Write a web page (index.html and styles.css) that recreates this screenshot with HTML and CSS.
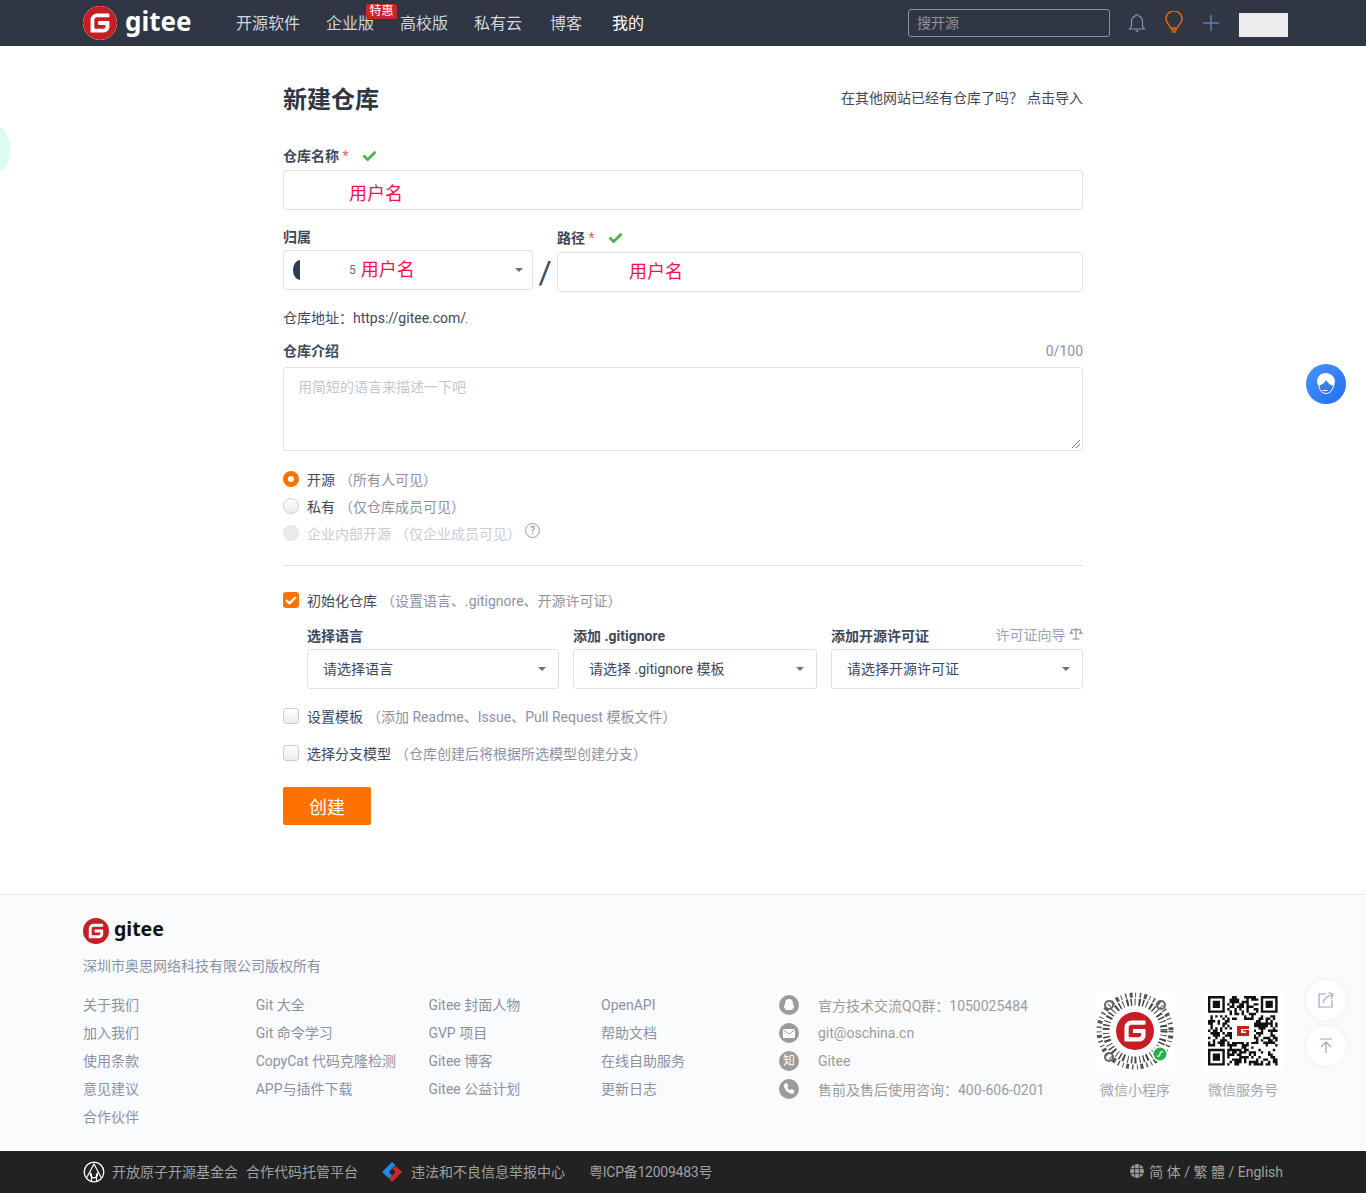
FILE: index.html
```html
<!DOCTYPE html>
<html lang="zh-CN">
<head>
  <meta charset="UTF-8">
  <meta name="viewport" content="width=device-width, initial-scale=1.0">
  <title>新建仓库 - Gitee</title>
  <link rel="stylesheet" href="styles.css">
</head>
<body>
  <svg class="defs" width="0" height="0" aria-hidden="true">
    <symbol id="gitee-logo" viewBox="0 0 24 24">
      <path fill="#c71d23" d="M11.984 0A12 12 0 0 0 0 12a12 12 0 0 0 12 12 12 12 0 0 0 12-12A12 12 0 0 0 12 0a12 12 0 0 0-.016 0zm6.09 5.333c.328 0 .593.266.592.593v1.482a.594.594 0 0 1-.593.592H9.777c-.982 0-1.778.796-1.778 1.778v5.63c0 .327.266.592.593.592h5.63c.982 0 1.778-.796 1.778-1.778v-.296a.593.593 0 0 0-.592-.593h-4.15a.592.592 0 0 1-.592-.592v-1.482a.593.593 0 0 1 .593-.592h6.815c.327 0 .593.265.593.592v3.408a4 4 0 0 1-4 4H5.926a.593.593 0 0 1-.593-.593V9.778a4.444 4.444 0 0 1 4.445-4.444h8.296Z"/>
    </symbol>
    <symbol id="check" viewBox="0 0 16 12">
      <path d="M1.5 6l4.5 4.5L14.5 2" fill="none" stroke="currentColor" stroke-width="3"/>
    </symbol>
  </svg>

  <!-- Top navigation -->
  <header class="topbar">
    <div class="topbar-inner">
      <a class="brand">
        <svg class="brand-icon"><use href="#gitee-logo"/></svg>
        <span class="brand-name">gitee</span>
      </a>
      <nav class="nav">
        <a class="nav-item nav-a">开源软件</a>
        <a class="nav-item nav-b">企业版<span class="badge">特惠</span></a>
        <a class="nav-item nav-b">高校版</a>
        <a class="nav-item nav-b">私有云</a>
        <a class="nav-item nav-c">博客</a>
        <a class="nav-item nav-d">我的</a>
      </nav>
      <div class="search">搜开源</div>
      <svg class="icon-bell" viewBox="0 0 18 22">
        <path d="M9 2.500a1.200 1.200 0 0 1 1.200 1.200C13 4.400 14.500 6.800 14.500 10v4.500l2 2.500h-15l2-2.500V10c0-3.200 1.500-5.600 4.300-6.300A1.200 1.200 0 0 1 9 2.500z" fill="none" stroke="#8e97ab" stroke-width="1.100"/>
        <path d="M7 18.500h4L9 20.500z" fill="#8e97ab"/>
      </svg>
      <svg class="icon-bulb" viewBox="0 0 20 24">
        <path d="M6.500 17c0-3-4.500-4.500-4.500-9a8 8 0 0 1 16 0c0 4.500-4.500 6-4.500 9z" fill="none" stroke="#e8690b" stroke-width="1.400"/>
        <path d="M7 19h6M8 21h4" stroke="#e8690b" stroke-width="1.500"/>
      </svg>
      <svg class="icon-plus" viewBox="0 0 18 18">
        <path d="M9 1v16M1 9h16" stroke="#5b7fb0" stroke-width="1.500"/>
      </svg>
      <div class="avatar-box"></div>
    </div>
  </header>

  <!-- Floating widgets -->
  <div class="side-tab"></div>
  <div class="help-float">
    <svg viewBox="0 0 40 40" width="40" height="40">
      <defs>
        <linearGradient id="help-bg" x1="0" y1="0" x2="1" y2="1">
          <stop offset="0" stop-color="#4a94ff"/>
          <stop offset="1" stop-color="#1f6ff0"/>
        </linearGradient>
      </defs>
      <circle cx="20" cy="20" r="20" fill="url(#help-bg)"/>
      <path d="M20 9c5 0 8.500 4 9 8l-1 5c-3-.5-6-2.500-8-6-1 2.500-3.500 5-7.500 5.500-1-1-1.500-3-1.500-4.500.5-4.500 4-8 9-8z" fill="#fff"/>
      <path d="M13 21c0 5 3 8.500 7 8.500s7-3.500 7.500-8.500" fill="none" stroke="#fff" stroke-width="1"/>
      <path d="M16.500 26.500h5" stroke="#fff" stroke-width="1"/>
    </svg>
  </div>
  <a class="round-btn round-share">
    <svg viewBox="0 0 18 18" width="18" height="18">
      <path d="M9 3H2v13h13V9" fill="none" stroke="#9aa7bd" stroke-width="1.200"/>
      <path d="M6 12c1-4 4-7 9-8M11.500 1.500L16 3.500l-2 4.500" fill="none" stroke="#9aa7bd" stroke-width="1.200"/>
    </svg>
  </a>
  <a class="round-btn round-top">
    <svg viewBox="0 0 18 18" width="18" height="18">
      <path d="M3 2h12M9 16V5M4 10l5-5 5 5" fill="none" stroke="#9aa7bd" stroke-width="1.200"/>
    </svg>
  </a>

  <!-- New repository form -->
  <main class="page">
    <div class="title-row">
      <h1>新建仓库</h1>
      <div class="import-tip">在其他网站已经有仓库了吗？<a>点击导入</a></div>
    </div>

    <label class="field-label label-name">仓库名称 <em>*</em>
      <svg class="ok"><use href="#check"/></svg>
    </label>
    <div class="box box-name"><span class="redacted">用户名</span></div>

    <div class="owner-row">
      <div class="owner-col">
        <label class="field-label">归属</label>
        <div class="box box-owner">
          <span class="half-avatar"></span>
          <span class="owner-digit">5</span>
          <span class="redacted">用户名</span>
          <i class="caret"></i>
        </div>
      </div>
      <div class="slash">/</div>
      <div class="path-col">
        <label class="field-label label-name">路径 <em>*</em>
          <svg class="ok"><use href="#check"/></svg>
        </label>
        <div class="box box-path"><span class="redacted">用户名</span></div>
      </div>
    </div>

    <div class="repo-url">仓库地址：https://gitee.com/<span class="url-cut"></span></div>

    <div class="desc-head">
      <label class="field-label">仓库介绍</label>
      <span class="counter">0/100</span>
    </div>
    <div class="box box-desc">
      用简短的语言来描述一下吧
      <svg class="resize-mark" viewBox="0 0 10 10" width="10" height="10">
        <path d="M9 1L1 9M9 5L5 9" stroke="#777" stroke-width="1"/>
      </svg>
    </div>

    <div class="radio-group">
      <div class="radio-row"><i class="radio radio-on"></i>开源<span class="hint">（所有人可见）</span></div>
      <div class="radio-row"><i class="radio"></i>私有<span class="hint">（仅仓库成员可见）</span></div>
      <div class="radio-row radio-disabled"><i class="radio"></i>企业内部开源<span class="hint">（仅企业成员可见）</span><span class="help-mark">?</span></div>
    </div>

    <hr class="divider">

    <div class="check-row check-init"><i class="checkbox checkbox-on"><svg><use href="#check"/></svg></i>初始化仓库<span class="hint">（设置语言、.gitignore、开源许可证）</span></div>

    <div class="init-options">
      <div class="option option-lang">
        <label class="field-label">选择语言</label>
        <div class="box box-select">请选择语言<i class="caret"></i></div>
      </div>
      <div class="option option-ignore">
        <label class="field-label">添加 .gitignore</label>
        <div class="box box-select">请选择 .gitignore 模板<i class="caret"></i></div>
      </div>
      <div class="option option-license">
        <div class="license-head">
          <label class="field-label">添加开源许可证</label>
          <a class="license-guide">许可证向导
            <svg viewBox="0 0 16 14" width="14" height="12">
              <path d="M8 0v13M4 13h8M2 2h12" stroke="#9aa3b5" stroke-width="1.600"/>
              <path d="M0 7h5L2.500 2.500zM11 7h5l-2.500-4.500z" fill="#9aa3b5"/>
            </svg>
          </a>
        </div>
        <div class="box box-select">请选择开源许可证<i class="caret"></i></div>
      </div>
    </div>

    <div class="check-row"><i class="checkbox"></i>设置模板<span class="hint">（添加 Readme、Issue、Pull Request 模板文件）</span></div>
    <div class="check-row"><i class="checkbox"></i>选择分支模型<span class="hint">（仓库创建后将根据所选模型创建分支）</span></div>

    <button class="create-btn" type="button">创建</button>
  </main>

  <!-- Footer -->
  <footer class="footer">
    <div class="footer-inner">
      <div class="footer-brand">
        <svg class="footer-logo"><use href="#gitee-logo"/></svg>
        <span class="footer-name">gitee</span>
      </div>
      <div class="footer-company">深圳市奥思网络科技有限公司版权所有</div>
      <div class="footer-main">
        <div class="footer-links">
          <ul>
            <li>关于我们</li>
            <li>加入我们</li>
            <li>使用条款</li>
            <li>意见建议</li>
            <li>合作伙伴</li>
          </ul>
          <ul>
            <li>Git 大全</li>
            <li>Git 命令学习</li>
            <li>CopyCat 代码克隆检测</li>
            <li>APP与插件下载</li>
          </ul>
          <ul>
            <li>Gitee 封面人物</li>
            <li>GVP 项目</li>
            <li>Gitee 博客</li>
            <li>Gitee 公益计划</li>
          </ul>
          <ul>
            <li>OpenAPI</li>
            <li>帮助文档</li>
            <li>在线自助服务</li>
            <li>更新日志</li>
          </ul>
        </div>
        <ul class="footer-contact">
          <li>
            <svg viewBox="0 0 20 20"><circle cx="10" cy="10" r="10" fill="#9b9b9b"/><path d="M10 4c2.600 0 4 2 4 4.500 0 1 1.500 3 1 4.500-.5.500-1.500-.5-1.500-.5 0 1 1 1.500.5 2-1 .5-3 .5-4 .2-1 .3-3 .3-4-.2-.5-.5.5-1 .5-2 0 0-1 1-1.500.5C4.500 11.500 6 9.500 6 8.500 6 6 7.400 4 10 4z" fill="#fff"/></svg>
            官方技术交流QQ群：1050025484
          </li>
          <li>
            <svg viewBox="0 0 20 20"><circle cx="10" cy="10" r="10" fill="#9b9b9b"/><rect x="4" y="6" width="12" height="9" rx="1" fill="#fff"/><path d="M4.500 7l5.500 4 5.500-4" fill="none" stroke="#9b9b9b" stroke-width="1"/></svg>
            git@oschina.cn
          </li>
          <li>
            <span class="zhi">知</span>
            Gitee
          </li>
          <li>
            <svg viewBox="0 0 20 20"><circle cx="10" cy="10" r="10" fill="#9b9b9b"/><path d="M6 4.500l2-.5 1.500 3-1.200 1.200c.5 1.400 1.500 2.400 3 3l1.200-1.200 3 1.500-.5 2c-.5 1-1.500 1.500-2.500 1.200C8.500 13.500 5.500 10.500 4.800 7c-.2-1 .2-2 1.200-2.500z" fill="#fff"/></svg>
            售前及售后使用咨询：400-606-0201
          </li>
        </ul>
        <div class="footer-qr">
          <figure>
            <svg class="qr-img" viewBox="0 0 80 80">
              <rect width="80" height="80" fill="#fff"/>
              <circle cx="40" cy="40" r="36" fill="none" stroke="#555" stroke-width="5" stroke-dasharray="1.500 3 3 2.500 1 3.500"/>
              <circle cx="40" cy="40" r="29" fill="none" stroke="#444" stroke-width="7" stroke-dasharray="1.500 2.500 1 3 2 2"/>
              <circle cx="14" cy="14" r="4" fill="none" stroke="#666" stroke-width="2"/>
              <circle cx="66" cy="14" r="4" fill="none" stroke="#666" stroke-width="2"/>
              <circle cx="14" cy="66" r="4" fill="none" stroke="#666" stroke-width="2"/>
              <circle cx="40" cy="40" r="21" fill="#fff"/>
              <svg x="21" y="21" width="38" height="38"><use href="#gitee-logo"/></svg>
              <circle cx="65" cy="63" r="8" fill="#fff"/>
              <circle cx="65" cy="63" r="6.500" fill="#26b14c"/>
              <path d="M62 65c2 1 3-1 3-2s1-3 3-2" fill="none" stroke="#fff" stroke-width="1.200"/>
            </svg>
            <figcaption>微信小程序</figcaption>
          </figure>
          <figure>
            <svg class="qr-img" id="service-qr" viewBox="0 0 80 80"></svg>
            <figcaption>微信服务号</figcaption>
          </figure>
        </div>
      </div>
    </div>
  </footer>

  <div class="bottombar">
    <div class="bottombar-inner">
      <svg class="atom-icon" viewBox="0 0 22 22">
        <circle cx="11" cy="11" r="9.800" fill="none" stroke="#fff" stroke-width="1.300"/>
        <path d="M3.500 17L11 3l7.500 14M8 11.500a3.500 3.500 0 1 0 6 0M8.500 20V13M13.500 20V13" fill="none" stroke="#fff" stroke-width="1.200"/>
      </svg>
      <span class="atom-text">开放原子开源基金会</span>
      <span class="atom-sub">合作代码托管平台</span>
      <svg class="report-icon" viewBox="0 0 20 20">
        <path d="M10 0l3.500 3L7 10l3 3.500-3 3L0 10z" fill="#1e88e5"/>
        <path d="M10 20l-3-3 6.500-7L10.500 7l3-3L20 10z" fill="#d8232a"/>
      </svg>
      <span class="report-text">违法和不良信息举报中心</span>
      <span class="icp-text">粤ICP备12009483号</span>
      <div class="lang-switch">
        <svg viewBox="0 0 14 14" width="14" height="14">
          <circle cx="7" cy="7" r="7" fill="#9a9a9a"/>
          <path d="M0 4.700h14M0 9.300h14M4.700 0v14M9.300 0v14" stroke="#222" stroke-width=".8"/>
        </svg>
        <span>简 体 / 繁 體 / English</span>
      </div>
    </div>
  </div>

  <script src="app.js"></script>
</body>
</html>
```

FILE: styles.css
```css
* {
  box-sizing: border-box;
}

body {
  margin: 0;
  font-family: Roboto, "Noto Sans CJK SC", sans-serif;
  font-size: 14px;
  color: #40485b;
  background-color: #fff;
}

ul {
  list-style: none;
  margin: 0;
  padding: 0;
}

figure {
  margin: 0;
}

.defs {
  position: absolute;
}

/* Top navigation */
.topbar {
  height: 46px;
  background-color: #303643;
}

.topbar-inner {
  display: flex;
  align-items: center;
  height: 46px;
  padding-left: 83px;
}

.brand {
  display: flex;
  align-items: center;
  width: 153px;
}

.brand-icon {
  width: 34px;
  height: 34px;
  border-radius: 50%;
  background-color: #fff;
}

.brand-name {
  margin-left: 8px;
  margin-top: -4px;
  font-family: "Noto Sans", sans-serif;
  font-size: 26px;
  font-weight: 700;
  line-height: 34px;
  color: #fff;
}

.nav {
  display: flex;
  width: 672px;
  margin-top: 2px;
}

.nav-item {
  position: relative;
  font-size: 16px;
  line-height: 46px;
  color: #d0d4dc;
}

.nav-a,
.nav-b {
  margin-right: 26px;
}

.nav-c {
  margin-left: 2px;
  margin-right: 30px;
}

.nav-d {
  color: #fff;
}

.badge {
  position: absolute;
  top: 3px;
  left: 40px;
  width: 31px;
  height: 15px;
  border-radius: 2px;
  background-color: #d0222e;
  color: #fff;
  font-size: 12px;
  line-height: 15px;
  text-align: center;
}

.search {
  width: 202px;
  height: 28px;
  padding-left: 8px;
  border: 1px solid #8b92a5;
  border-radius: 3px;
  color: #8d929d;
  font-size: 14px;
  line-height: 26px;
}

.icon-bell {
  width: 18px;
  height: 22px;
  margin-left: 18px;
}

.icon-bulb {
  width: 20px;
  height: 24px;
  margin-left: 18px;
}

.icon-plus {
  width: 18px;
  height: 18px;
  margin-left: 18px;
}

.avatar-box {
  width: 49px;
  height: 24px;
  margin-left: 19px;
  margin-top: 4px;
  background-color: #ececec;
}

/* Floating widgets */
.side-tab {
  position: absolute;
  top: 127px;
  left: -14px;
  width: 24px;
  height: 45px;
  border-radius: 50%;
  background-color: #dffbf0;
}

.help-float {
  position: absolute;
  top: 364px;
  left: 1306px;
  width: 40px;
  height: 40px;
}

.round-btn {
  position: absolute;
  left: 1306px;
  display: flex;
  align-items: center;
  justify-content: center;
  width: 40px;
  height: 40px;
  border-radius: 50%;
  background-color: #fff;
  box-shadow: 0 0 6px rgba(0, 0, 0, 0.06);
}

.round-share {
  top: 980px;
}

.round-top {
  top: 1026px;
}

/* Form */
.page {
  width: 800px;
  margin: 0 auto 69px;
  padding-top: 36px;
}

.title-row {
  display: flex;
  align-items: center;
  justify-content: space-between;
  height: 34px;
  margin-bottom: 30px;
}

h1 {
  margin: 0;
  padding-top: 1px;
  font-size: 24px;
  font-weight: 700;
  line-height: 34px;
  color: #303643;
}

.import-tip {
  padding-bottom: 5px;
  font-size: 14px;
  color: #40485b;
}

.import-tip a {
  margin-left: 4px;
}

.field-label {
  display: block;
  height: 20px;
  font-size: 14px;
  font-weight: 700;
  line-height: 20px;
  color: #40485b;
}

.field-label em {
  color: #f1615c;
  font-style: normal;
  font-weight: 400;
}

.ok {
  width: 15px;
  height: 11px;
  margin-left: 10px;
  color: #4caf50;
}

.label-name {
  margin-bottom: 4px;
}

.box {
  position: relative;
  border: 1px solid #dce3e8;
  border-radius: 3px;
  background-color: #fff;
}

.redacted {
  font-size: 18px;
  color: #f5114a;
}

.box-name {
  height: 40px;
  padding-left: 65px;
  line-height: 46px;
}

.owner-row {
  display: flex;
  margin-top: 17px;
}

.owner-col {
  width: 250px;
}

.owner-col .field-label {
  margin-bottom: 3px;
}

.box-owner {
  display: flex;
  align-items: center;
  height: 40px;
  padding-left: 9px;
}

.box-owner .redacted {
  margin-top: -5px;
}

.half-avatar {
  width: 7px;
  height: 20px;
  border-radius: 7px 0 0 7px / 10px 0 0 10px;
  background-color: #2d3c50;
}

.owner-digit {
  margin-left: 49px;
  margin-right: 5px;
  font-size: 12px;
  color: #6a6f7a;
}

.slash {
  width: 24px;
  padding-top: 25px;
  font-size: 32px;
  line-height: 40px;
  font-weight: 400;
  text-align: center;
  color: #40485b;
}

.path-col {
  width: 526px;
  padding-top: 1px;
}

.box-path {
  height: 40px;
  padding-left: 71px;
  line-height: 38px;
}

.caret {
  position: absolute;
  top: 17px;
  right: 9px;
  width: 0;
  height: 0;
  border-left: 4px solid transparent;
  border-right: 4px solid transparent;
  border-top: 4px solid #6a6f7a;
}

.repo-url {
  height: 20px;
  margin-top: 16px;
  font-size: 14px;
  line-height: 20px;
}

.url-cut {
  display: inline-block;
  width: 1px;
  height: 1px;
  background-color: #40485b;
}

.desc-head {
  display: flex;
  justify-content: space-between;
  height: 20px;
  margin-top: 13px;
  margin-bottom: 6px;
}

.counter {
  line-height: 20px;
  color: #8c92a4;
}

.box-desc {
  height: 84px;
  padding: 10px 14px;
  line-height: 18px;
  color: #c2c7d0;
}

.resize-mark {
  position: absolute;
  right: 1px;
  bottom: 1px;
}

.radio-group {
  margin-top: 14px;
}

.radio-row {
  display: flex;
  align-items: center;
  height: 27px;
  color: #40485b;
}

.radio {
  width: 16px;
  height: 16px;
  margin-right: 8px;
  border: 1px solid #ccd;
  border-radius: 50%;
  background: linear-gradient(#fff, #e9ebef);
}

.radio-on {
  border: 5px solid #fe7300;
  background: #fff;
}

.hint {
  margin-left: 4px;
  color: #8c92a4;
}

.radio-disabled,
.radio-disabled .hint {
  color: #c9ccd2;
}

.radio-disabled .radio {
  border-color: #e2e3e6;
  background: #e9eaec;
}

.help-mark {
  width: 15px;
  height: 15px;
  margin-left: 4px;
  margin-top: -4px;
  border: 1px solid #8c9bb0;
  border-radius: 50%;
  color: #6e7d93;
  font-size: 10px;
  line-height: 13px;
  text-align: center;
}

.divider {
  height: 1px;
  margin: 19px 0 0;
  border: 0;
  background-color: #dce3e8;
}

.check-row {
  display: flex;
  align-items: center;
  height: 20px;
  margin-top: 17px;
  font-size: 14px;
}

.check-init {
  margin-top: 24px;
}

.checkbox {
  flex: none;
  width: 16px;
  height: 16px;
  margin-right: 8px;
  border: 1px solid #ccd;
  border-radius: 3px;
  background: linear-gradient(#fff, #e9ebef);
}

.checkbox-on {
  border: 0;
  padding: 3px 2px;
  background: #fe7300;
  color: #fff;
}

.checkbox-on svg {
  display: block;
  width: 12px;
  height: 10px;
}

.init-options {
  display: flex;
  margin-top: 16px;
  margin-left: 24px;
}

.init-options .field-label {
  margin-bottom: 3px;
}

.option-lang {
  width: 252px;
  margin-right: 14px;
}

.option-ignore {
  width: 244px;
  margin-right: 14px;
}

.option-license {
  width: 252px;
}

.license-head {
  display: flex;
  justify-content: space-between;
}

.license-guide {
  height: 20px;
  line-height: 18px;
  color: #9aa3b5;
}

.box-select {
  height: 40px;
  padding-left: 15px;
  line-height: 38px;
  color: #40485b;
}

.box-select .caret {
  right: 12px;
}

.create-btn {
  display: block;
  width: 88px;
  height: 38px;
  margin-top: 24px;
  border: 0;
  border-radius: 2px;
  background-color: #fe7300;
  color: #fff;
  font-family: inherit;
  font-size: 18px;
}

/* Footer */
.footer {
  height: 257px;
  border-top: 1px solid #e8eaee;
  background-color: #fafbfc;
}

.footer-inner {
  width: 1200px;
  margin: 0 auto;
  padding-top: 23px;
}

.footer-brand {
  display: flex;
  align-items: center;
  height: 26px;
}

.footer-logo {
  width: 26px;
  height: 26px;
}

.footer-name {
  margin-left: 5px;
  margin-top: -6px;
  font-family: "Noto Sans", sans-serif;
  font-size: 19.5px;
  font-weight: 700;
  color: #111;
}

.footer-company {
  height: 20px;
  margin-top: 12px;
  font-size: 14px;
  line-height: 20px;
  color: #8c92a4;
}

.footer-main {
  display: flex;
  margin-top: 15px;
}

.footer-links {
  display: grid;
  grid-template-columns: repeat(4, 172.7px);
  width: 691px;
}

.footer-links li {
  height: 28px;
  font-size: 14px;
  line-height: 28px;
  color: #8c92a4;
}

.footer-contact {
  width: 316px;
  margin-left: 5px;
}

.footer-contact li {
  display: flex;
  align-items: center;
  height: 28px;
  font-size: 14px;
  color: #9b9b9b;
}

.footer-contact svg,
.zhi {
  flex: none;
  width: 20px;
  height: 20px;
  margin-right: 19px;
}

.zhi {
  border-radius: 50%;
  background-color: #9b9b9b;
  color: #fff;
  font-size: 12px;
  line-height: 20px;
  text-align: center;
}

.footer-qr {
  display: flex;
  gap: 28px;
}

.qr-img {
  display: block;
  width: 80px;
  height: 80px;
}

figcaption {
  height: 20px;
  margin-top: 9px;
  margin-left: -3px;
  margin-right: -3px;
  font-size: 14px;
  line-height: 20px;
  color: #a5a8ad;
  text-align: center;
  white-space: nowrap;
}

/* Bottom bar */
.bottombar {
  height: 42px;
  background-color: #222;
  color: #a0a0a0;
}

.bottombar-inner {
  display: flex;
  align-items: center;
  height: 42px;
  padding: 0 83px 3px;
  font-size: 14px;
}

.atom-icon {
  width: 22px;
  height: 22px;
  margin-top: 3px;
}

.atom-text {
  margin-left: 7px;
}

.atom-sub {
  margin-left: 8px;
}

.report-icon {
  width: 20px;
  height: 20px;
  margin-left: 24px;
  margin-top: 3px;
}

.report-text {
  margin-left: 9px;
}

.icp-text {
  margin-left: 24px;
  letter-spacing: -0.25px;
}

.lang-switch {
  display: flex;
  align-items: center;
  gap: 5px;
  margin-left: auto;
}
```

FILE: app.js
```js
// Draws the footer service-account QR code as a grid of modules
const qr = document.getElementById('service-qr');
const size = 29;
const cell = 2.4;
const offset = 5;
let seed = 7;

function nextBit() {
  seed = (seed * 1103515245 + 12345) & 0x7fffffff;
  return (seed >> 16) & 1;
}

function inFinder(x, y) {
  const nearLeft = x < 8;
  const nearRight = x >= size - 8;
  const nearTop = y < 8;
  const nearBottom = y >= size - 8;
  return (nearLeft && nearTop) || (nearRight && nearTop) || (nearLeft && nearBottom);
}

function finderCell(x, y) {
  const fx = x >= size - 8 ? x - (size - 7) : x;
  const fy = y >= size - 8 ? y - (size - 7) : y;
  if (fx < 0 || fy < 0 || fx > 6 || fy > 6) return false;
  const edge = fx === 0 || fy === 0 || fx === 6 || fy === 6;
  const core = fx >= 2 && fx <= 4 && fy >= 2 && fy <= 4;
  return edge || core;
}

let path = '';
for (let y = 0; y < size; y++) {
  for (let x = 0; x < size; x++) {
    const dark = inFinder(x, y) ? finderCell(x, y) : nextBit();
    if (dark) {
      path += `M${offset + x * cell} ${offset + y * cell}h${cell}v${cell}h-${cell}z`;
    }
  }
}

qr.innerHTML = `
  <rect width="80" height="80" fill="#fff"/>
  <path d="${path}" fill="#111"/>
  <rect x="29" y="29" width="22" height="22" fill="#fff"/>
  <svg x="31" y="31" width="18" height="18"><rect width="18" height="18" fill="#fff"/>
    <path d="M3 4h12v3H7v4h5V9.500H9V8h6v6H3z" fill="#c71d23"/>
  </svg>
`;
```
